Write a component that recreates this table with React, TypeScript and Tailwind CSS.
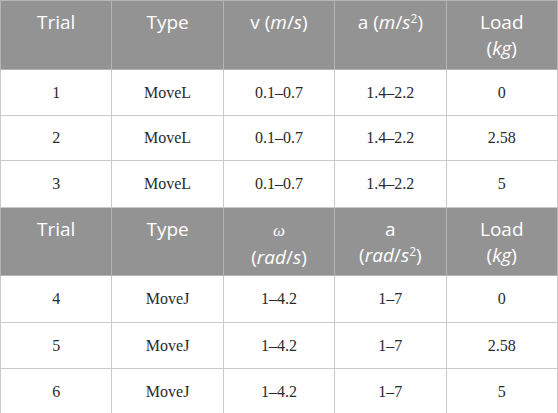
import React, { FC, ReactNode } from "react";

const head = "bg-[#939393] text-white align-top pt-[8px] px-2 text-[19px] leading-[26px] font-normal font-['Open_Sans',sans-serif] border border-[#b4b4b4] text-center";
const cell = "align-middle text-center text-[16px] font-normal font-['Liberation_Serif',serif] text-[#2a2a2a] border border-[#c9c9c9]";

const I: FC<{ children: ReactNode }> = ({ children }) => <i>{children}</i>;
const Sup: FC = () => <sup className="text-[12px]">2</sup>;

interface Row {
  trial: string;
  type: string;
  v: string;
  a: string;
  load: string;
}

const linear: Row[] = [
  { trial: "1", type: "MoveL", v: "0.1–0.7", a: "1.4–2.2", load: "0" },
  { trial: "2", type: "MoveL", v: "0.1–0.7", a: "1.4–2.2", load: "2.58" },
  { trial: "3", type: "MoveL", v: "0.1–0.7", a: "1.4–2.2", load: "5" },
];

const joint: Row[] = [
  { trial: "4", type: "MoveJ", v: "1–4.2", a: "1–7", load: "0" },
  { trial: "5", type: "MoveJ", v: "1–4.2", a: "1–7", load: "2.58" },
  { trial: "6", type: "MoveJ", v: "1–4.2", a: "1–7", load: "5" },
];

const Body: FC<{ rows: Row[]; heights: string[] }> = ({ rows, heights }) => (
  <>
    {rows.map((r, i) => (
      <tr key={r.trial} className={heights[i]}>
        <td className={cell}>{r.trial}</td>
        <td className={cell}>{r.type}</td>
        <td className={cell}>{r.v}</td>
        <td className={cell}>{r.a}</td>
        <td className={cell}>{r.load}</td>
      </tr>
    ))}
  </>
);

const App: FC = () => {
  return (
    <div className="w-[558px] h-[413px] bg-white overflow-hidden">
      <table className="w-full table-fixed border-collapse">
        <tbody>
          <tr className="h-[69px]">
            <th className={head}>Trial</th>
            <th className={head}>Type</th>
            <th className={head}>
              v (<I>m</I>/<I>s</I>)
            </th>
            <th className={head}>
              a (<I>m</I>/<I>s</I>
              <Sup />)
            </th>
            <th className={head}>
              Load
              <br />(<I>kg</I>)
            </th>
          </tr>
          <Body rows={linear} heights={["h-[46px]", "h-[45px]", "h-[47px]"]} />
          <tr className="h-[68px]">
            <th className={head}>Trial</th>
            <th className={head}>Type</th>
            <th className={head}>
              <span className="italic text-[17px] font-['Liberation_Serif',serif]">ω</span>
              <br />(<I>rad</I>/<I>s</I>)
            </th>
            <th className={head}>
              a
              <br />(<I>rad</I>/<I>s</I>
              <Sup />)
            </th>
            <th className={head}>
              Load
              <br />(<I>kg</I>)
            </th>
          </tr>
          <Body rows={joint} heights={["h-[47px]", "h-[46px]", "h-[46px]"]} />
        </tbody>
      </table>
    </div>
  );
};

export default App;
